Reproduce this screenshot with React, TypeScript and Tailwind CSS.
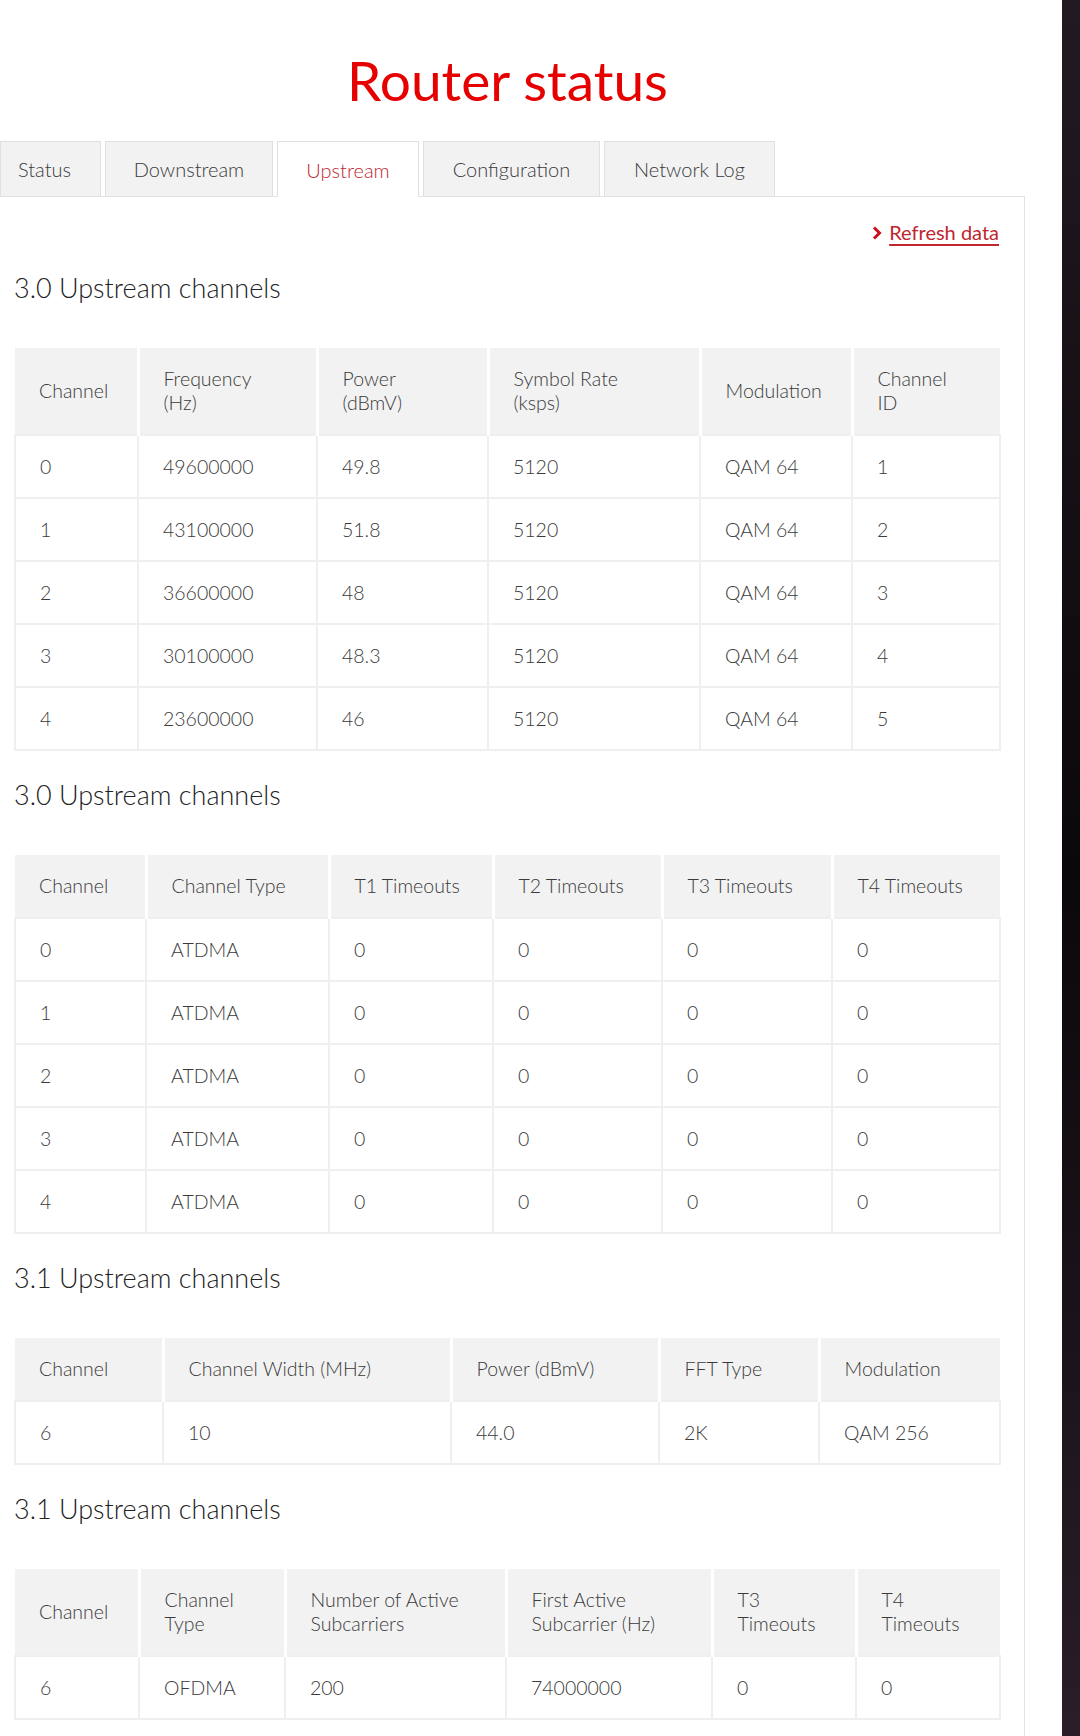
import React from "react";

// Upstream tab of the router status page — four channel tables, each with a heading.
type Table = {
  title: string;
  widths: number[];
  head: string[][];
  rows: string[][];
};

const TABLES: Table[] = [
  {
    title: "3.0 Upstream channels",
    widths: [123, 179, 171, 212, 152, 148],
    head: [["Channel"], ["Frequency", "(Hz)"], ["Power", "(dBmV)"], ["Symbol Rate", "(ksps)"], ["Modulation"], ["Channel", "ID"]],
    rows: [
      ["0", "49600000", "49.8", "5120", "QAM 64", "1"],
      ["1", "43100000", "51.8", "5120", "QAM 64", "2"],
      ["2", "36600000", "48", "5120", "QAM 64", "3"],
      ["3", "30100000", "48.3", "5120", "QAM 64", "4"],
      ["4", "23600000", "46", "5120", "QAM 64", "5"],
    ],
  },
  {
    title: "3.0 Upstream channels",
    widths: [131, 183, 164, 169, 170, 168],
    head: [["Channel"], ["Channel Type"], ["T1 Timeouts"], ["T2 Timeouts"], ["T3 Timeouts"], ["T4 Timeouts"]],
    rows: [0, 1, 2, 3, 4].map((n) => [String(n), "ATDMA", "0", "0", "0", "0"]),
  },
  {
    title: "3.1 Upstream channels",
    widths: [148, 288, 208, 160, 181],
    head: [["Channel"], ["Channel Width (MHz)"], ["Power (dBmV)"], ["FFT Type"], ["Modulation"]],
    rows: [["6", "10", "44.0", "2K", "QAM 256"]],
  },
  {
    title: "3.1 Upstream channels",
    widths: [124, 146, 221, 206, 144, 144],
    head: [["Channel"], ["Channel", "Type"], ["Number of Active", "Subcarriers"], ["First Active", "Subcarrier (Hz)"], ["T3", "Timeouts"], ["T4", "Timeouts"]],
    rows: [["6", "OFDMA", "200", "74000000", "0", "0"]],
  },
];

const TABS = [
  { label: "Status", width: "w-[101px] justify-start pl-[17px]" },
  { label: "Downstream", width: "w-[168px] justify-center" },
  { label: "Upstream", width: "w-[142px] justify-center", active: true },
  { label: "Configuration", width: "w-[177px] justify-center" },
  { label: "Network Log", width: "w-[171px] justify-center" },
];

function ChannelTable({ table }: { table: Table }) {
  return (
    <table className="w-[985px] table-fixed border-collapse text-[19.5px] leading-[24px] text-[#3a3a3a]">
      <colgroup>
        {table.widths.map((w, i) => (
          <col key={i} style={{ width: w }} />
        ))}
      </colgroup>
      <thead>
        <tr>
          {table.head.map((lines, i) => (
            <th
              key={i}
              className="bg-[#f2f2f2] border-r-[3px] border-white last:border-r-0 py-[19px] pl-[24px] pr-2 text-left font-light align-middle"
            >
              {lines.map((l, j) => (
                <div key={j}>{l}</div>
              ))}
            </th>
          ))}
        </tr>
      </thead>
      <tbody>
        {table.rows.map((row, r) => (
          <tr key={r}>
            {row.map((cell, c) => (
              <td key={c} className="border-2 border-[#efefef] py-[18px] pl-[24px] pr-2 leading-[25px] align-middle">
                {cell}
              </td>
            ))}
          </tr>
        ))}
      </tbody>
    </table>
  );
}

export default function App() {
  return (
    <div className="flex min-h-[1736px] bg-white font-['Lato','Noto_Sans',sans-serif] font-light text-[#333]">
      <div className="w-[1062px] shrink-0 flex flex-col">
        <div className="w-[1025px] flex flex-col flex-1">
          {/* Title */}
          <div className="h-[141px] pt-[18px] pr-[10px] flex items-center justify-center">
            <h1 className="text-[55px] leading-[64px] text-[#e60000] font-normal">Router status</h1>
          </div>

          {/* Tabs */}
          <div className="flex items-end gap-[4px] border-b border-[#e3e3e3]">
            {TABS.map((t) => (
              <div
                key={t.label}
                className={`${t.width} h-[55px] flex items-center border border-b-0 border-[#e0e0e0] text-[20px] ${
                  t.active ? "bg-white text-[#c0262f] -mb-px h-[56px]" : "bg-[#f2f2f2] text-[#3a3a3a]"
                }`}
              >
                {t.label}
              </div>
            ))}
          </div>

          {/* Panel */}
          <div className="flex-1 border-r border-[#e3e3e3] pl-[14px] pr-[25px] pt-[23px] pb-[20px]">
            <div className="flex justify-end">
              <a href="#" className="flex items-center gap-[7px] text-[20px] leading-[24px] text-[#c0262f] font-normal">
                <svg width="10" height="14" viewBox="0 0 10 14" className="mt-[2px]">
                  <polyline points="2,1.5 7.5,7 2,12.5" fill="none" stroke="#c8101e" strokeWidth="3" />
                </svg>
                <span className="underline underline-offset-[4px]">Refresh data</span>
              </a>
            </div>

            {TABLES.map((t, i) => (
              <section key={i}>
                <h2 className="mt-[29px] mb-[45px] text-[27px] leading-[30px] font-light text-[#222]">
                  {t.title}
                </h2>
                <ChannelTable table={t} />
              </section>
            ))}
          </div>
        </div>
      </div>
      <div className="flex-1 bg-gradient-to-b from-[#221a21] via-[#0b080b] to-[#2a1e28]" />
    </div>
  );
}
